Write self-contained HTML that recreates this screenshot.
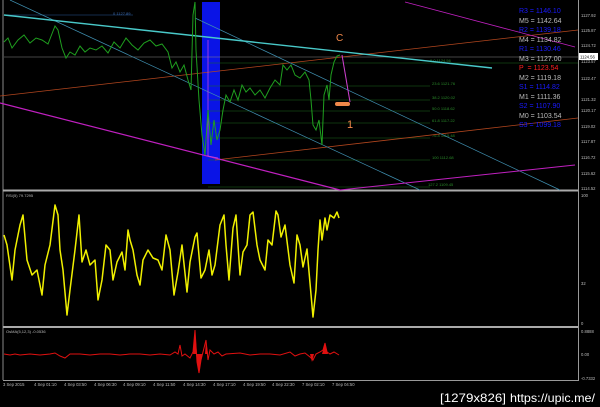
<!DOCTYPE html>
<html><head><meta charset="utf-8"><style>
html,body{margin:0;padding:0;background:#000;width:600px;height:407px;overflow:hidden}
svg{display:block}
text{font-family:"Liberation Sans",sans-serif}
</style></head><body>
<svg width="600" height="407" viewBox="0 0 600 407" xmlns="http://www.w3.org/2000/svg">
<rect width="600" height="407" fill="#000"/>
<line x1="3" y1="0" x2="3" y2="380" stroke="#888" stroke-width="1"/>
<line x1="578.5" y1="0" x2="578.5" y2="381" stroke="#999" stroke-width="1"/>
<line x1="3" y1="190.5" x2="578" y2="190.5" stroke="#aaa" stroke-width="2"/>
<line x1="3" y1="327" x2="578" y2="327" stroke="#aaa" stroke-width="2"/>
<line x1="3" y1="380.5" x2="578" y2="380.5" stroke="#999" stroke-width="1"/>

<rect x="202" y="2" width="18" height="182" fill="#0a14e6"/>
<line x1="4" y1="15" x2="133" y2="15" stroke="#2a5a9a" stroke-width="0.6"/>
<text x="113" y="15" fill="#3a6ab0" font-size="4">0 1127.89</text>
<line x1="4" y1="57" x2="578" y2="57" stroke="#888" stroke-width="0.6"/>
<g stroke="#1d6b1d" stroke-width="0.6">
<line x1="208" y1="63" x2="578" y2="63"/>
<line x1="208" y1="86" x2="430" y2="86"/>
<line x1="208" y1="100" x2="430" y2="100"/>
<line x1="208" y1="111" x2="430" y2="111"/>
<line x1="208" y1="123" x2="430" y2="123"/>
<line x1="208" y1="138" x2="430" y2="138"/>
<line x1="208" y1="160" x2="430" y2="160"/>
<line x1="208" y1="187" x2="430" y2="187"/>
</g>
<g fill="#2a8a2a" font-size="4">
<text x="430" y="62">0.0 1124.56</text>
<text x="432" y="85">23.6 1121.76</text>
<text x="432" y="99">38.2 1120.02</text>
<text x="432" y="110">50.0 1118.62</text>
<text x="432" y="122">61.8 1117.22</text>
<text x="432" y="137">76.4 1115.48</text>
<text x="432" y="159">100 1112.68</text>
<text x="428" y="186">127.2 1109.45</text>
</g>
<line x1="0" y1="96" x2="578" y2="30" stroke="#b2461e" stroke-width="0.8"/>
<line x1="215" y1="160" x2="578" y2="118" stroke="#b2461e" stroke-width="0.8"/>
<line x1="10" y1="0" x2="420" y2="190" stroke="#3f8fb0" stroke-width="0.7"/>
<line x1="195" y1="18" x2="560" y2="190" stroke="#3f8fb0" stroke-width="0.7"/>
<line x1="4" y1="15" x2="492" y2="68" stroke="#49c9c9" stroke-width="1.4"/>
<line x1="0" y1="103" x2="340" y2="190" stroke="#c020c0" stroke-width="1.2"/>
<line x1="340" y1="190" x2="575" y2="165" stroke="#c020c0" stroke-width="1"/>
<line x1="405" y1="2" x2="575" y2="47" stroke="#c020c0" stroke-width="0.8"/>
<polyline points="208,40 208,156 218,158" fill="none" stroke="#c040e0" stroke-width="0.8"/>
<polyline fill="none" stroke="#1f9f1f" stroke-width="1" points="4,42 8,38 12,48 18,40 24,35 30,43 36,38 42,40 48,44 55,26 58,30 62,48 66,58 70,52 75,55 80,46 85,52 90,48 96,50 102,46 108,53 114,42 120,48 126,38 132,45 138,50 144,43 150,40 156,46 162,44 168,52 172,68 176,62 180,72 184,65 188,80 191,90 193,15 195,2 196,50 199,100 202,135 205,155 208,110 211,145 214,120 217,140 220,130 223,110 226,95 230,102 234,90 238,100 242,85 246,92 250,88 255,95 260,90 265,98 270,88 275,80 280,85 283,65 287,70 291,65 295,75 300,78 305,72 309,80 311,100 313,125 316,130 319,120 322,145 324,95 327,85 329,100 331,75 334,62 337,56 340,55"/>
<line x1="342" y1="55" x2="350" y2="102" stroke="#d040d0" stroke-width="1"/>
<rect x="335" y="102" width="15" height="4" rx="2" fill="#f0884a"/>
<text x="336" y="41" fill="#f0884a" font-size="10">C</text>
<text x="347" y="128" fill="#f0884a" font-size="11">1</text>

<g font-size="7">
<text x="519" y="13" fill="#1a1aff">R3 = 1146.10</text>
<text x="519" y="23" fill="#bbb">M5 = 1142.64</text>
<text x="519" y="32" fill="#1a1aff">R2 = 1139.18</text>
<text x="519" y="42" fill="#bbb">M4 = 1134.82</text>
<text x="519" y="51" fill="#1a1aff">R1 = 1130.46</text>
<text x="519" y="61" fill="#bbb">M3 = 1127.00</text>
<text x="519" y="70" fill="#ff2020">P&#160; = 1123.54</text>
<text x="519" y="80" fill="#bbb">M2 = 1119.18</text>
<text x="519" y="89" fill="#1a1aff">S1 = 1114.82</text>
<text x="519" y="99" fill="#bbb">M1 = 1111.36</text>
<text x="519" y="108" fill="#1a1aff">S2 = 1107.90</text>
<text x="519" y="118" fill="#bbb">M0 = 1103.54</text>
<text x="519" y="127" fill="#1a1aff">S3 = 1099.18</text>
</g>
<g fill="#bbb" font-size="4.2">
<text x="581" y="17">1127.92</text>
<text x="581" y="32">1125.87</text>
<text x="581" y="47">1124.72</text>
<text x="581" y="63">1123.57</text>
<text x="581" y="80">1122.47</text>
<text x="581" y="101">1121.32</text>
<text x="581" y="112">1120.17</text>
<text x="581" y="128">1119.02</text>
<text x="581" y="143">1117.87</text>
<text x="581" y="159">1116.72</text>
<text x="581" y="175">1115.62</text>
<text x="581" y="190">1114.52</text>
<text x="581" y="197">100</text>
<text x="581" y="285">32</text>
<text x="581" y="325">0</text>
<text x="581" y="333">0.8888</text>
<text x="581" y="356">0.00</text>
<text x="581" y="380">-0.7332</text>
</g>
<rect x="579" y="53" width="19" height="7" fill="#fff"/>
<text x="580" y="58.5" fill="#000" font-size="4.2">1124.56</text>

<text x="6" y="197" fill="#bbb" font-size="4">RSI(5) 79.7295</text>
<polyline fill="none" stroke="#f0f000" stroke-width="1.5" stroke-linejoin="round" points="4,235 7,245 12,280 15,250 20,225 23,215 27,260 32,275 37,270 42,295 45,265 50,245 55,205 58,215 60,250 63,270 67,315 70,290 75,250 79,215 82,262 86,250 90,265 95,260 98,300 102,280 106,245 110,250 113,280 117,262 122,252 125,270 128,230 130,240 133,250 137,275 140,285 143,260 148,250 153,258 158,260 162,270 166,235 170,250 174,295 178,272 182,245 187,292 190,262 195,237 197,233 201,278 205,270 209,250 212,275 215,265 220,225 224,215 226,245 229,280 233,228 236,215 240,275 243,252 247,245 250,215 253,212 257,245 260,260 265,270 268,240 272,245 276,211 278,215 281,237 285,225 290,265 294,283 297,235 300,245 303,267 307,249 310,283 313,317 316,290 318,250 320,220 322,240 325,218 327,230 330,215 334,218 337,212 339,218"/>

<text x="6" y="333" fill="#bbb" font-size="4">OsMA(5,12,3) -0.0536</text>
<polyline fill="none" stroke="#e01010" stroke-width="1" points="4,354 10,355 15,354 20,355 30,354 40,355 50,354 55,353 60,356 65,358 70,354 80,354 90,355 100,354 110,354 120,355 130,354 140,354 150,355 160,354 170,355 175,352 178,354 180,345 182,356 185,354 190,358 193,352 195,330 197,362 199,373 201,360 203,352 206,340 208,360 210,350 214,354 218,352 222,356 226,354 240,353 250,355 260,354 270,354 280,355 290,352 295,356 300,354 305,353 310,357 313,360 316,354 320,352 323,350 325,343 327,352 330,354 334,352 339,355"/>
<path d="M193,354 L195,330 L197,354 Z M196,354 L199,373 L202,354 Z M205,354 L206,340 L208,354 Z M310,354 L312,362 L314,354 Z M322,354 L325,343 L328,354 Z" fill="#e01010"/>

<g fill="#bbb" font-size="4.2">
<text x="3" y="386">3 Sep 2015</text>
<text x="34" y="386">4 Sep 01:10</text>
<text x="64" y="386">4 Sep 03:50</text>
<text x="94" y="386">4 Sep 06:30</text>
<text x="123" y="386">4 Sep 09:10</text>
<text x="153" y="386">4 Sep 11:50</text>
<text x="183" y="386">4 Sep 14:30</text>
<text x="213" y="386">4 Sep 17:10</text>
<text x="243" y="386">4 Sep 19:50</text>
<text x="272" y="386">4 Sep 22:30</text>
<text x="302" y="386">7 Sep 02:10</text>
<text x="332" y="386">7 Sep 04:50</text>
</g>
<text x="440" y="402" fill="#fff" font-size="12" textLength="66" lengthAdjust="spacingAndGlyphs">[1279x826]</text>
<text x="510" y="402" fill="#fff" font-size="12" textLength="85" lengthAdjust="spacingAndGlyphs">https://upic.me/</text>
</svg>
</body></html>
